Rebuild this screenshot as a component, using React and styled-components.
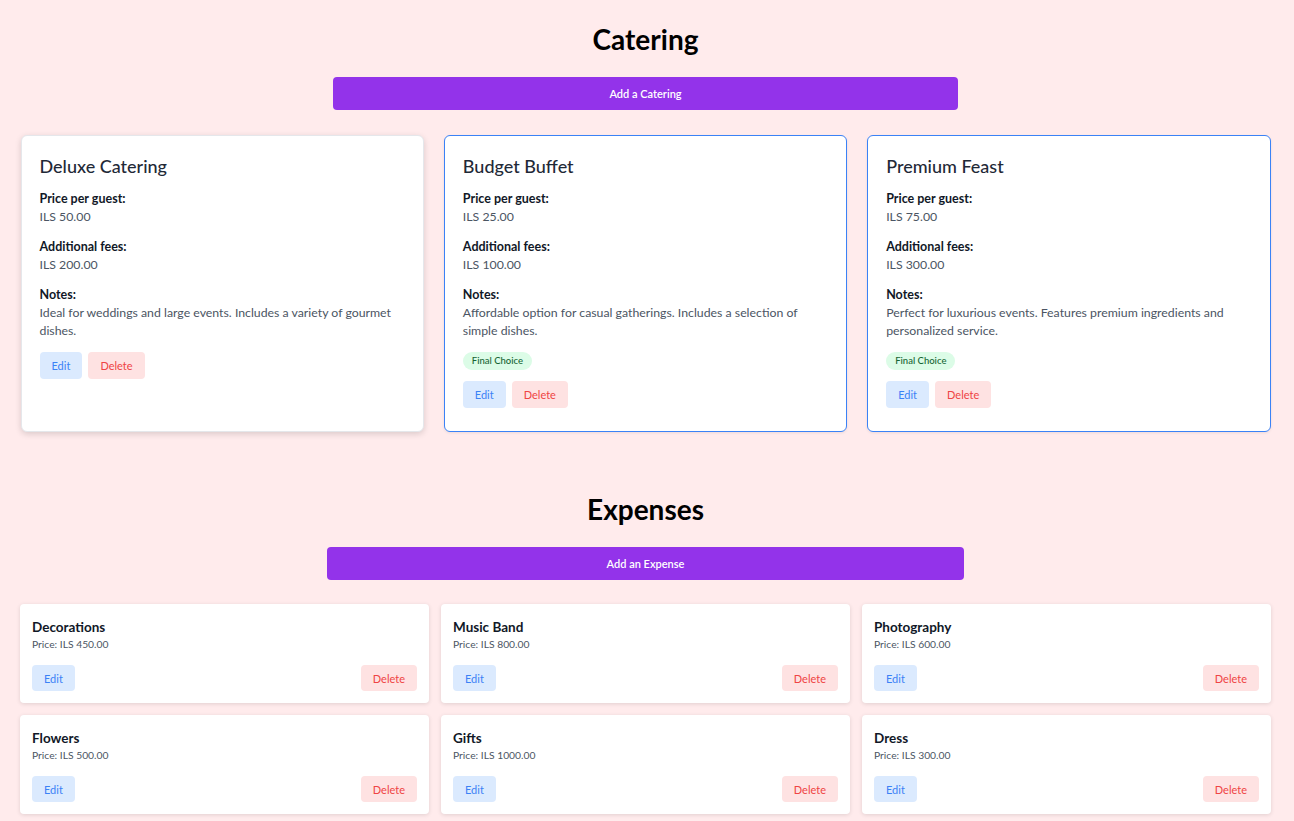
import React from "react";
import styled, { createGlobalStyle, css } from "styled-components";

const GlobalStyle = createGlobalStyle`
  html, body {
    margin: 0;
    padding: 0;
    background: #ffebec;
    font-family: "Segoe UI", Lato, "Noto Sans", sans-serif;
    color: #1f2937;
  }
`;

const caterings = [
  {
    name: "Deluxe Catering",
    price: "50.00",
    fees: "200.00",
    notes: "Ideal for weddings and large events. Includes a variety of gourmet dishes.",
    final: false
  },
  {
    name: "Budget Buffet",
    price: "25.00",
    fees: "100.00",
    notes: "Affordable option for casual gatherings. Includes a selection of simple dishes.",
    final: true
  },
  {
    name: "Premium Feast",
    price: "75.00",
    fees: "300.00",
    notes: "Perfect for luxurious events. Features premium ingredients and personalized service.",
    final: true
  }
];

const expenses = [
  { name: "Decorations", price: "450.00" },
  { name: "Music Band", price: "800.00" },
  { name: "Photography", price: "600.00" },
  { name: "Flowers", price: "500.00" },
  { name: "Gifts", price: "1000.00" },
  { name: "Dress", price: "300.00" }
];

const App = () => {
  return (
    <Page>
      <GlobalStyle />
      <Section>
        <Title>Catering</Title>
        <AddButton width={625}>Add a Catering</AddButton>
        <CateringGrid>
          {caterings.map(c => (
            <CateringCard key={c.name} selected={c.final}>
              <CardTitle>{c.name}</CardTitle>
              <Field>
                <Label>Price per guest:</Label>
                <Value>ILS {c.price}</Value>
              </Field>
              <Field>
                <Label>Additional fees:</Label>
                <Value>ILS {c.fees}</Value>
              </Field>
              <Field>
                <Label>Notes:</Label>
                <Value>{c.notes}</Value>
              </Field>
              {c.final && <Badge>Final Choice</Badge>}
              <Actions>
                <SmallButton variant="edit">Edit</SmallButton>
                <SmallButton variant="delete">Delete</SmallButton>
              </Actions>
            </CateringCard>
          ))}
        </CateringGrid>
      </Section>

      <Section expenses>
        <Title>Expenses</Title>
        <AddButton width={637}>Add an Expense</AddButton>
        <ExpenseGrid>
          {expenses.map(e => (
            <ExpenseCard key={e.name}>
              <ExpenseName>{e.name}</ExpenseName>
              <ExpensePrice>Price: ILS {e.price}</ExpensePrice>
              <ExpenseActions>
                <SmallButton variant="edit" compact>Edit</SmallButton>
                <SmallButton variant="delete" compact>Delete</SmallButton>
              </ExpenseActions>
            </ExpenseCard>
          ))}
        </ExpenseGrid>
      </Section>
    </Page>
  );
};

export default App;

const Page = styled.div`
  padding: 19px 3px 40px 0;
`;

const Section = styled.section`
  display: flex;
  flex-direction: column;
  align-items: center;
  margin: 0 auto;
  width: ${p => (p.expenses ? "1251px" : "1250px")};
  ${p =>
    p.expenses &&
    css`
      margin-top: 57px;
    `}
`;

const Title = styled.h2`
  margin: 0;
  font-size: 28px;
  line-height: 40px;
  font-weight: 700;
  color: #000;
`;

const AddButton = styled.button`
  margin-top: 18px;
  width: ${p => p.width}px;
  height: 33px;
  border: none;
  border-radius: 4px;
  background: #9333ea;
  color: #fff;
  font-family: inherit;
  font-size: 11px;
  font-weight: 600;
  cursor: pointer;
`;

const CateringGrid = styled.div`
  margin-top: 25px;
  width: 100%;
  display: grid;
  grid-template-columns: repeat(3, 1fr);
  gap: 20px;
`;

const CateringCard = styled.div`
  box-sizing: border-box;
  height: 297px;
  padding: 16px 18px;
  background: #fff;
  border-radius: 6px;
  border: 1px solid ${p => (p.selected ? "#3b82f6" : "#e5e7eb")};
  box-shadow: ${p =>
    p.selected ? "0 1px 3px rgba(0,0,0,0.08)" : "0 2px 6px rgba(0,0,0,0.15)"};
`;

const CardTitle = styled.h3`
  margin: 0 0 10px;
  font-size: 18px;
  line-height: 28px;
  font-weight: 500;
  color: #1f2937;
`;

const Field = styled.div`
  margin-bottom: 12px;
`;

const Label = styled.div`
  font-size: 12.5px;
  line-height: 18px;
  font-weight: 700;
  color: #111827;
`;

const Value = styled.div`
  font-size: 12.3px;
  line-height: 18px;
  color: #4b5563;
`;

const Badge = styled.div`
  width: fit-content;
  margin-bottom: 11px;
  padding: 0 9px;
  height: 18px;
  line-height: 18px;
  border-radius: 9px;
  background: #dcfce7;
  color: #166534;
  font-size: 9.5px;
  font-weight: 500;
`;

const Actions = styled.div`
  display: flex;
  gap: 6px;
`;

const SmallButton = styled.button`
  height: ${p => (p.compact ? "26px" : "27px")};
  padding: 0 12px;
  border: none;
  border-radius: 4px;
  font-family: inherit;
  font-size: 11px;
  cursor: pointer;
  ${p =>
    p.variant === "edit"
      ? css`
          background: #dbeafe;
          color: #3b82f6;
        `
      : css`
          background: #fee2e2;
          color: #ef4444;
        `}
`;

const ExpenseGrid = styled.div`
  margin-top: 24px;
  width: 100%;
  display: grid;
  grid-template-columns: repeat(3, 1fr);
  gap: 12px;
`;

const ExpenseCard = styled.div`
  box-sizing: border-box;
  height: 99px;
  padding: 14px 12px 12px;
  background: #fff;
  border-radius: 4px;
  box-shadow: 0 1px 4px rgba(0, 0, 0, 0.12);
  display: flex;
  flex-direction: column;
`;

const ExpenseName = styled.div`
  font-size: 13.5px;
  line-height: 18px;
  font-weight: 700;
  color: #111827;
`;

const ExpensePrice = styled.div`
  font-size: 10.3px;
  line-height: 16px;
  color: #4b5563;
`;

const ExpenseActions = styled.div`
  margin-top: auto;
  display: flex;
  justify-content: space-between;
`;
